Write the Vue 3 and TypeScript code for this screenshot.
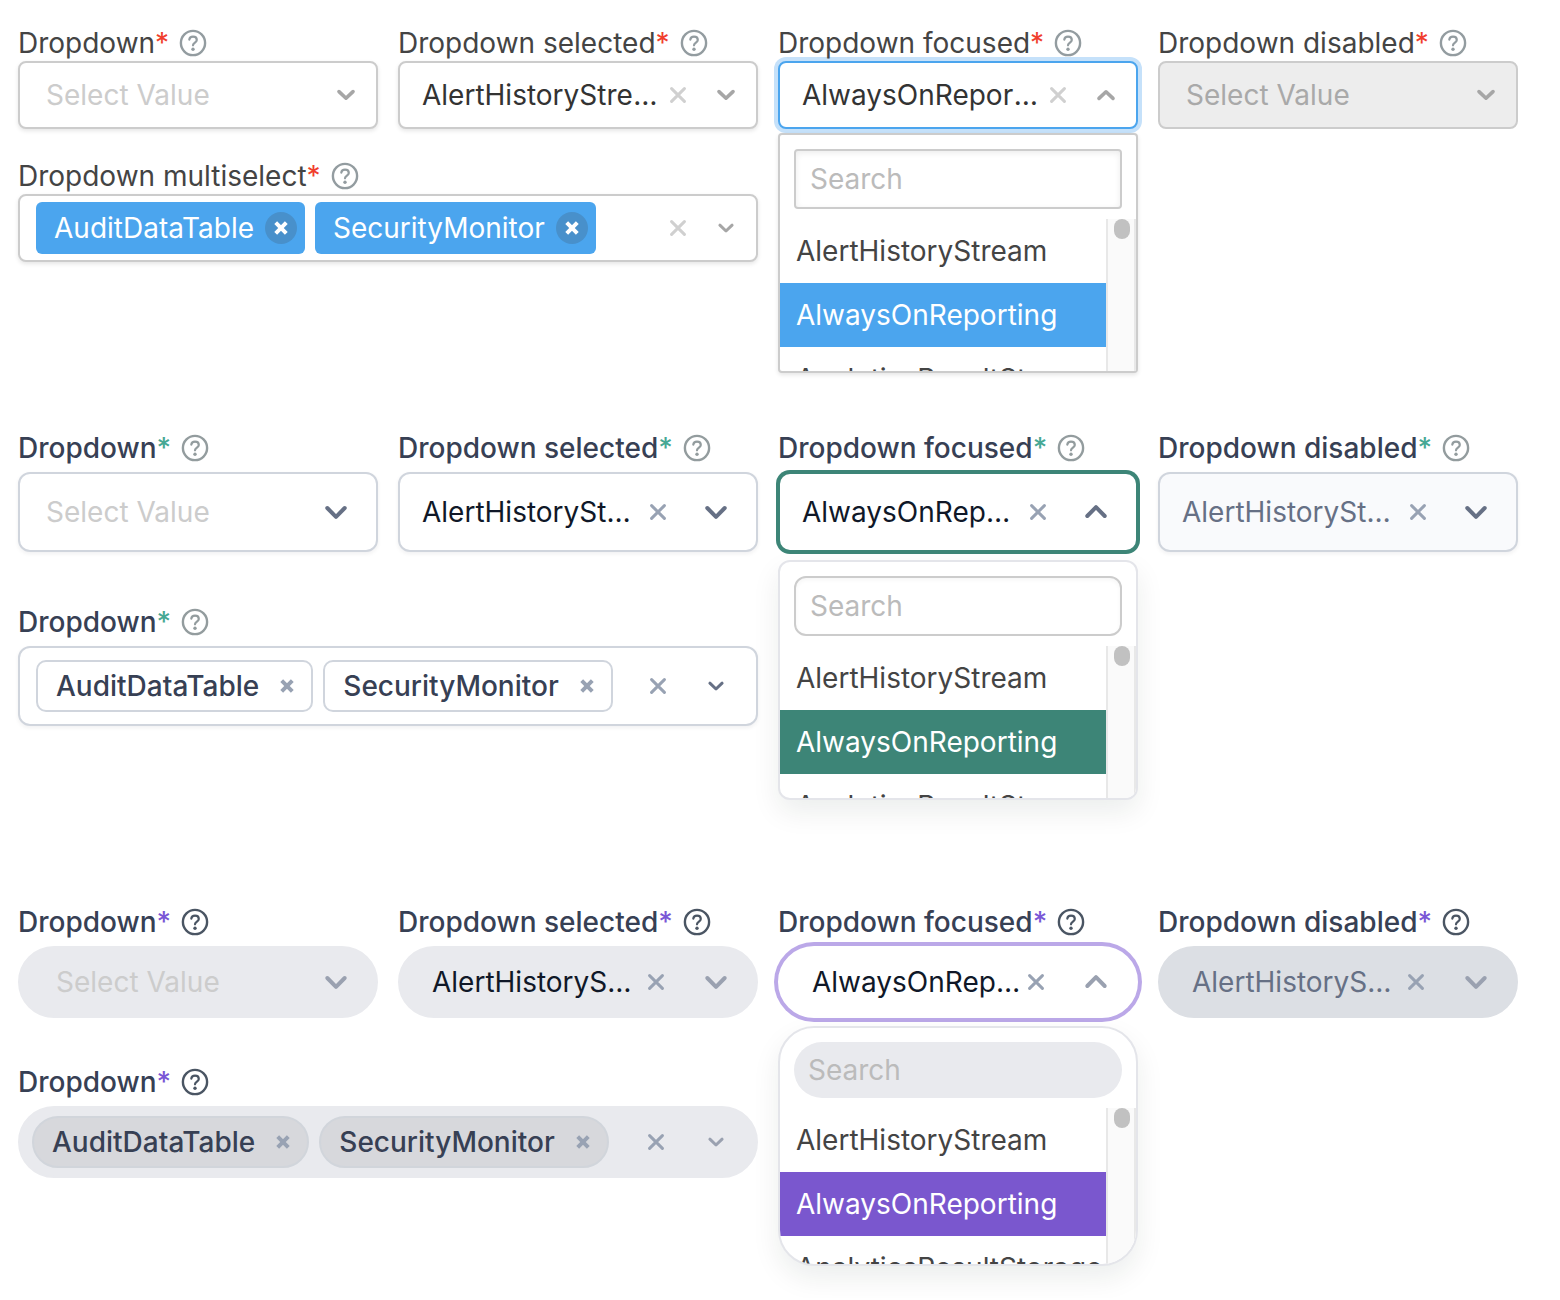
<script setup lang="ts">
interface Field {
  id: string
  kind: 'single' | 'multi'
  label: string
  value?: string
  chips?: string[]
  open?: boolean
  disabled?: boolean
}

interface Theme {
  name: string
  fields: Field[]
}

const placeholder = 'Select Value'
const options = ['AlertHistoryStream', 'AlwaysOnReporting', 'AnalyticsResultStorage']
const chips = ['AuditDataTable', 'SecurityMonitor']

function buildTheme(name: string, multiLabel: string, disabledValue?: string): Theme {
  return {
    name,
    fields: [
      { id: `${name}-empty`, kind: 'single', label: 'Dropdown' },
      { id: `${name}-selected`, kind: 'single', label: 'Dropdown selected', value: options[0] },
      { id: `${name}-focused`, kind: 'single', label: 'Dropdown focused', value: options[1], open: true },
      { id: `${name}-disabled`, kind: 'single', label: 'Dropdown disabled', value: disabledValue, disabled: true },
      { id: `${name}-multi`, kind: 'multi', label: multiLabel, chips },
    ],
  }
}

const themes: Theme[] = [
  buildTheme('classic', 'Dropdown multiselect'),
  buildTheme('green', 'Dropdown', options[0]),
  buildTheme('violet', 'Dropdown', options[0]),
]
</script>

<template>
  <main class="page">
    <section v-for="theme in themes" :key="theme.name" class="theme" :class="theme.name">
      <div
        v-for="field in theme.fields"
        :key="field.id"
        class="field"
        :class="{ multi: field.kind === 'multi', open: field.open, disabled: field.disabled, empty: !field.value }"
      >
        <div class="caption">
          <label :for="field.id">{{ field.label }}<span class="required">*</span></label>
          <button type="button" class="help" aria-label="Help">
            <svg width="28" height="28" viewBox="0 0 28 28" fill="none" stroke="currentColor" aria-hidden="true">
              <circle cx="14" cy="14" r="12.1" stroke-width="2.4" />
              <path
                d="M10.3 10.7C10.5 8.8 12 7.7 14 7.7C16.3 7.7 17.8 9 17.8 10.9C17.8 13.5 14 13.6 14 16.3"
                stroke-width="2.2"
                stroke-linecap="round"
              />
              <circle cx="14" cy="20.3" r="1.7" fill="currentColor" stroke="none" />
            </svg>
          </button>
        </div>

        <div class="control">
          <template v-if="field.kind === 'single'">
            <select :id="field.id" class="value" :disabled="field.disabled">
              <option v-if="!field.value">{{ placeholder }}</option>
              <option v-for="option in options" :key="option" :selected="option === field.value">{{ option }}</option>
            </select>
            <button v-if="field.value" type="button" class="clear" aria-label="Clear" :disabled="field.disabled">
              <svg width="16" height="16" viewBox="0 0 16 16" aria-hidden="true">
                <path d="M1.6 1.6L14.4 14.4M14.4 1.6L1.6 14.4" />
              </svg>
            </button>
            <svg class="chevron" width="24" height="24" viewBox="0 0 24 24" aria-hidden="true">
              <path class="wide" :d="field.open ? 'M3.3 16L12 7.2L20.7 16' : 'M3.3 8L12 16.8L20.7 8'" />
              <path class="medium" :d="field.open ? 'M5 15.4L12 8.8L19 15.4' : 'M5 8.6L12 15.2L19 8.6'" />
            </svg>
          </template>
          <template v-else>
            <span v-for="chip in field.chips" :key="chip" class="chip">
              {{ chip }}
              <button type="button" class="remove" :aria-label="`Remove ${chip}`">
                <svg width="14" height="14" viewBox="0 0 14 14" aria-hidden="true">
                  <path d="M1.7 1.7L12.3 12.3M12.3 1.7L1.7 12.3" />
                </svg>
              </button>
            </span>
            <input :id="field.id" class="entry" type="text" />
            <button type="button" class="clear" aria-label="Clear all">
              <svg width="16" height="16" viewBox="0 0 16 16" aria-hidden="true">
                <path d="M1.6 1.6L14.4 14.4M14.4 1.6L1.6 14.4" />
              </svg>
            </button>
            <button type="button" class="toggle" aria-label="Open list">
              <svg class="chevron" width="24" height="24" viewBox="0 0 24 24" aria-hidden="true">
                <path class="small" d="M5.9 9.2L12 15L18.1 9.2" />
              </svg>
            </button>
          </template>
        </div>

        <div v-if="field.open" class="panel">
          <input class="search" type="text" placeholder="Search" aria-label="Search" />
          <div class="results">
            <ul class="list" role="listbox">
              <li
                v-for="option in options"
                :key="option"
                role="option"
                :aria-selected="option === field.value"
                :class="{ active: option === field.value }"
              >
                {{ option }}
              </li>
            </ul>
            <div class="track" aria-hidden="true"><div class="thumb"></div></div>
          </div>
        </div>
      </div>
    </section>
  </main>
</template>

<style>
body {
  background: #fff;
}
</style>

<style scoped>
.page {
  display: flex;
  flex-direction: column;
  padding: 25px 42px 32px 18px;
  font-family: Inter, 'Liberation Sans', sans-serif;
  font-size: 28px;
  line-height: 36px;
  font-optical-sizing: none;
}

.page *,
.page *::before {
  box-sizing: border-box;
}

.theme {
  display: grid;
  grid-template-columns: repeat(4, minmax(0, 1fr));
  grid-template-rows: auto 1fr;
  column-gap: 20px;
}

.classic {
  --label: #444;
  --label-weight: 400;
  --accent: #4ba5ee;
  --star: #f03e2d;
  --help: #939ca0;
  --caption-gap: 0px;
  --height: 68px;
  --border: #ccc;
  --fill: #fff;
  --radius: 8px;
  --text: #333;
  --arrow: #a6a6a6;
  --clear: #d0d0d0;
  --start: 22px;
  --clear-gap: 10px;
  --arrow-gap: 28px;
  --end: 18px;
  row-gap: 29px;
  margin-bottom: 57px;
}

.green {
  --label: #374054;
  --label-weight: 500;
  --accent: #3d8577;
  --star: #46a894;
  --help: #939c9e;
  --caption-gap: 6px;
  --height: 80px;
  --border: #d0d5dd;
  --fill: #fff;
  --radius: 12px;
  --text: #101828;
  --arrow: #667085;
  --clear: #98a2b3;
  --start: 22px;
  --clear-gap: 12px;
  --arrow-gap: 38px;
  --end: 28px;
  row-gap: 52px;
  margin-bottom: 104px;
}

.violet {
  --label: #374054;
  --label-weight: 500;
  --accent: #7a57ce;
  --star: #7a57d6;
  --help: #4a5563;
  --caption-gap: 6px;
  --height: 72px;
  --border: #e9eaee;
  --fill: #e9eaee;
  --radius: 36px;
  --text: #101828;
  --arrow: #9aa1b0;
  --clear: #98a2b3;
  --start: 32px;
  --clear-gap: 10px;
  --arrow-gap: 40px;
  --end: 28px;
  row-gap: 46px;
}

.field {
  min-width: 0;
}

.field.open {
  grid-row: 1 / 3;
  grid-column: 3;
}

.field.multi {
  grid-row: 2;
  grid-column: 1 / 3;
}

.caption {
  display: flex;
  align-items: center;
  gap: 10px;
  height: 36px;
  margin-bottom: var(--caption-gap);
  color: var(--label);
  font-weight: var(--label-weight);
}

.required {
  color: var(--star);
}

button {
  display: flex;
  align-items: center;
  justify-content: center;
  flex: none;
  padding: 0;
  border: 0;
  background: none;
  color: inherit;
  font: inherit;
}

.help {
  color: var(--help);
}

.control {
  display: flex;
  align-items: center;
  height: var(--height);
  padding-right: var(--end);
  border: 2px solid var(--border);
  border-radius: var(--radius);
  background: var(--fill);
  color: var(--text);
}

.classic .control {
  box-shadow: 0 2px 4px rgba(0, 0, 0, 0.1);
}

.green .control {
  box-shadow: 0 2px 4px rgba(16, 24, 40, 0.06);
}

.value {
  flex: 1;
  min-width: 0;
  margin: 0;
  padding: 0 0 0 var(--start);
  border: 0;
  outline: 0;
  background: none;
  appearance: none;
  color: inherit;
  font: inherit;
  line-height: 36px;
  opacity: 1;
  overflow: hidden;
  text-overflow: ellipsis;
  white-space: nowrap;
}

.empty .value {
  padding-left: calc(var(--start) + 4px);
  color: #ccc;
}

.clear {
  margin-left: var(--clear-gap);
  margin-right: var(--arrow-gap);
}

svg {
  display: block;
  flex: none;
}

.clear path {
  fill: none;
  stroke: var(--clear);
  stroke-width: 3;
  stroke-linecap: round;
}

.chevron path {
  fill: none;
  stroke: var(--arrow);
  stroke-width: 4;
  stroke-linecap: round;
  stroke-linejoin: round;
}

.chevron .medium {
  stroke-width: 3.6;
}

.chevron .small {
  stroke-width: 3;
}

.classic .wide,
.green .medium,
.violet .medium {
  display: none;
}

.classic .open .control {
  border-color: var(--accent);
  box-shadow: 0 0 0 4px #c5e1fa;
}

.green .open .control {
  border-color: var(--accent);
  box-shadow: 0 0 0 2px var(--accent);
}

.violet .open .control {
  --clear-gap: 6px;
  border-color: #fff;
  background: #fff;
  box-shadow: 0 0 0 4px #bba8e8;
}

.classic .disabled .control {
  background: #ededed;
  box-shadow: none;
}

.classic .disabled .value {
  color: #a9a9a9;
}

.green .disabled .control {
  background: #f9fafc;
  color: #667085;
}

.violet .disabled .control {
  border-color: #dcdfe4;
  background: #dcdfe4;
  color: #667085;
}

.multi .control {
  padding-left: 16px;
}

.violet .multi .control {
  padding-left: 12px;
}

.chip {
  display: flex;
  align-items: center;
  flex: none;
  height: 52px;
  margin-right: 10px;
  padding: 0 8px 0 18px;
  border: 2px solid var(--border);
  border-radius: 10px;
  color: var(--label);
  font-weight: 500;
}

.remove {
  width: 32px;
  height: 32px;
  margin-left: 12px;
  border-radius: 50%;
}

.remove path {
  fill: none;
  stroke: #98a2b3;
  stroke-width: 4;
}

.classic .chip {
  border: 0;
  border-radius: 6px;
  background: var(--accent);
  color: #fff;
  font-weight: 400;
}

.classic .remove {
  margin-left: 11px;
  background: #4890cb;
}

.classic .remove path {
  stroke: #fff;
}

.violet .chip {
  border-color: #d1d5db;
  border-radius: 26px;
  background: #d7d8dc;
}

.entry {
  flex: 1;
  width: 0;
  min-width: 0;
  padding: 0;
  border: 0;
  outline: 0;
  background: none;
  font: inherit;
}

.panel {
  display: flex;
  flex-direction: column;
  height: 240px;
  margin-top: 8px;
  border: 2px solid #e4e5ea;
  border-radius: var(--radius);
  background: #fff;
  box-shadow: 0 12px 28px rgba(16, 40, 30, 0.08);
  overflow: hidden;
}

.classic .panel {
  margin-top: 4px;
  border-color: #ccc;
  border-radius: 4px;
  box-shadow: 0 2px 4px rgba(0, 0, 0, 0.1);
}

.search {
  flex: none;
  height: 60px;
  margin: 14px 14px 10px;
  padding: 0 14px;
  border: 2px solid #ccc;
  border-radius: 4px;
  outline: 0;
  background: #fff;
  box-shadow: inset 0 2px 6px rgba(0, 0, 0, 0.08);
  color: #444;
  font: inherit;
}

.search::placeholder {
  color: #bbb;
  opacity: 1;
}

.green .search {
  border-radius: 12px;
  box-shadow: inset 0 2px 4px rgba(0, 0, 0, 0.04);
}

.violet .search {
  height: 56px;
  border: 0;
  border-radius: 28px;
  background: #e9eaee;
  box-shadow: none;
}

.results {
  display: flex;
  flex: 1;
  min-height: 0;
}

.list {
  flex: 1;
  min-width: 0;
  margin: 0;
  padding: 0;
  overflow: hidden;
  color: #444;
  list-style: none;
}

.list li {
  padding: 14px 16px;
}

.list .active {
  background: var(--accent);
  color: #fff;
}

.track {
  width: 30px;
  flex: none;
  padding-left: 6px;
  border: solid #e8e8e8;
  border-width: 0 2px;
  background: #fafafa;
}

.thumb {
  width: 16px;
  height: 20px;
  border-radius: 8px;
  background: #c1c1c1;
}
</style>
